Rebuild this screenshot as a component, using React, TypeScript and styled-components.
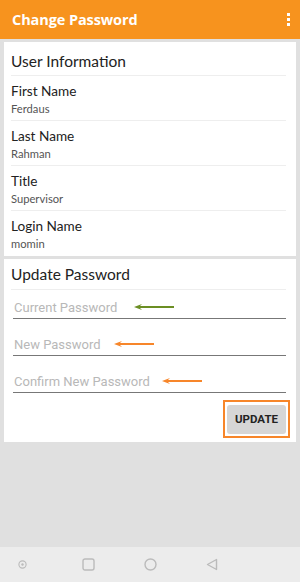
import React from "react";
import styled, { createGlobalStyle } from "styled-components";

const Global = createGlobalStyle`
  html, body { margin: 0; padding: 0; }
  body { background: #e0e0e0; font-family: Lato, "Noto Sans", sans-serif; }
  * { box-sizing: border-box; }
`;

const Screen = styled.div`
  width: 300px;
  height: 582px;
  display: flex;
  flex-direction: column;
  background: #e0e0e0;
  overflow: hidden;
`;

const AppBar = styled.div`
  height: 39px;
  background: #f7931e;
  display: flex;
  align-items: center;
  justify-content: space-between;
  padding: 0 10px 0 12px;
  flex-shrink: 0;
`;

const Title = styled.div`
  color: #fff;
  font-family: "Open Sans", sans-serif;
  font-weight: 700;
  font-size: 14.5px;
  letter-spacing: -0.1px;
`;

const Dots = styled.div`
  display: flex;
  flex-direction: column;
  gap: 2px;
  span {
    width: 3px;
    height: 3px;
    background: #fff;
    display: block;
  }
`;

const Content = styled.div`
  flex: 1;
  padding: 3px 4px 0 4px;
  display: flex;
  flex-direction: column;
  gap: 3px;
`;

const Card = styled.div`
  background: #fff;
  padding: 0 10px 0 7px;
  display: flex;
  flex-direction: column;
`;

const CardHeader = styled.div<{ $compact?: boolean }>`
  font-size: 15.5px;
  color: #222;
  height: ${(p) => (p.$compact ? "31px" : "34px")};
  padding-top: ${(p) => (p.$compact ? "6px" : "10px")};
  border-bottom: 1px solid #eeeeee;
`;

const InfoRow = styled.div<{ $last?: boolean }>`
  height: 45px;
  padding-top: 7px;
  border-bottom: ${(p) => (p.$last ? "none" : "1px solid #eeeeee")};
`;

const Label = styled.div`
  font-size: 13.6px;
  color: #222;
  line-height: 17px;
`;

const Value = styled.div`
  font-size: 11.2px;
  color: #555;
  line-height: 15px;
  margin-top: 1px;
`;

const Fields = styled.div`
  padding: 0 0 0 2px;
  display: flex;
  flex-direction: column;
  gap: 8px;
`;

const Field = styled.div`
  height: 29px;
  display: flex;
  align-items: flex-end;
  border-bottom: 1px solid #777;
  padding-bottom: 3px;
  padding-left: 1px;
  font-family: Roboto, sans-serif;
  font-size: 13px;
  color: #b8b8b8;
`;

const Arrow = styled.svg<{ $gap: number }>`
  margin-bottom: 5px;
  margin-left: ${(p) => p.$gap}px;
`;

const Actions = styled.div`
  display: flex;
  justify-content: flex-end;
  padding: 7px 0 4px 0;
`;

const Highlight = styled.div`
  border: 2px solid #f7862a;
  padding: 2px;
  width: 67px;
  height: 38px;
  display: flex;
  align-items: center;
  justify-content: center;
  margin-right: -4px;
`;

const UpdateButton = styled.button`
  width: 59px;
  height: 29px;
  border: none;
  border-radius: 3px;
  background: #d6d6d6;
  font-family: Roboto, sans-serif;
  font-weight: 700;
  font-size: 11.5px;
  color: #222;
  padding: 0;
`;

const NavBar = styled.div`
  height: 35px;
  background: #ececec;
  display: flex;
  align-items: center;
  flex-shrink: 0;
`;

const NavIcon = styled.div<{ $left: number }>`
  display: flex;
  margin-left: ${(p) => p.$left}px;
`;

const ArrowIcon = ({ color, gap }: { color: string; gap: number }) => (
  <Arrow $gap={gap} width="41" height="6" viewBox="0 0 41 6">
    <path d="M0 3 L8 0 L6 2.1 L40 2.1 L40 3.9 L6 3.9 L8 6 Z" fill={color} />
  </Arrow>
);

export default function App() {
  const info = [
    ["First Name", "Ferdaus"],
    ["Last Name", "Rahman"],
    ["Title", "Supervisor"],
    ["Login Name", "momin"],
  ];
  return (
    <>
      <Global />
      <Screen>
        <AppBar>
          <Title>Change Password</Title>
          <Dots>
            <span />
            <span />
            <span />
          </Dots>
        </AppBar>
        <Content>
          <Card>
            <CardHeader>User Information</CardHeader>
            {info.map(([l, v], i) => (
              <InfoRow key={l} $last={i === info.length - 1}>
                <Label>{l}</Label>
                <Value>{v}</Value>
              </InfoRow>
            ))}
          </Card>
          <Card>
            <CardHeader $compact>Update Password</CardHeader>
            <Fields>
              <Field>
                Current Password
                <ArrowIcon color="#6b8e23" gap={17} />
              </Field>
              <Field>
                New Password
                <ArrowIcon color="#f7862a" gap={13} />
              </Field>
              <Field>
                Confirm New Password
                <ArrowIcon color="#f7862a" gap={12} />
              </Field>
            </Fields>
            <Actions>
              <Highlight>
                <UpdateButton>UPDATE</UpdateButton>
              </Highlight>
            </Actions>
          </Card>
        </Content>
        <NavBar>
          <NavIcon $left={18}>
            <svg width="9" height="9" viewBox="0 0 9 9">
              <circle cx="4.5" cy="4.5" r="3.6" fill="none" stroke="#bbb" strokeWidth="1.1" />
              <circle cx="4.5" cy="4.5" r="1.2" fill="#bbb" />
            </svg>
          </NavIcon>
          <NavIcon $left={55}>
            <svg width="13" height="13" viewBox="0 0 13 13">
              <rect x="1" y="1" width="11" height="11" rx="2" fill="none" stroke="#bbb" strokeWidth="1.4" />
            </svg>
          </NavIcon>
          <NavIcon $left={49}>
            <svg width="13" height="13" viewBox="0 0 13 13">
              <circle cx="6.5" cy="6.5" r="5.5" fill="none" stroke="#bbb" strokeWidth="1.4" />
            </svg>
          </NavIcon>
          <NavIcon $left={49}>
            <svg width="12" height="13" viewBox="0 0 12 13">
              <path d="M10.5 1.5 L1.5 6.5 L10.5 11.5 Z" fill="none" stroke="#bbb" strokeWidth="1.4" strokeLinejoin="round" />
            </svg>
          </NavIcon>
        </NavBar>
      </Screen>
    </>
  );
}
